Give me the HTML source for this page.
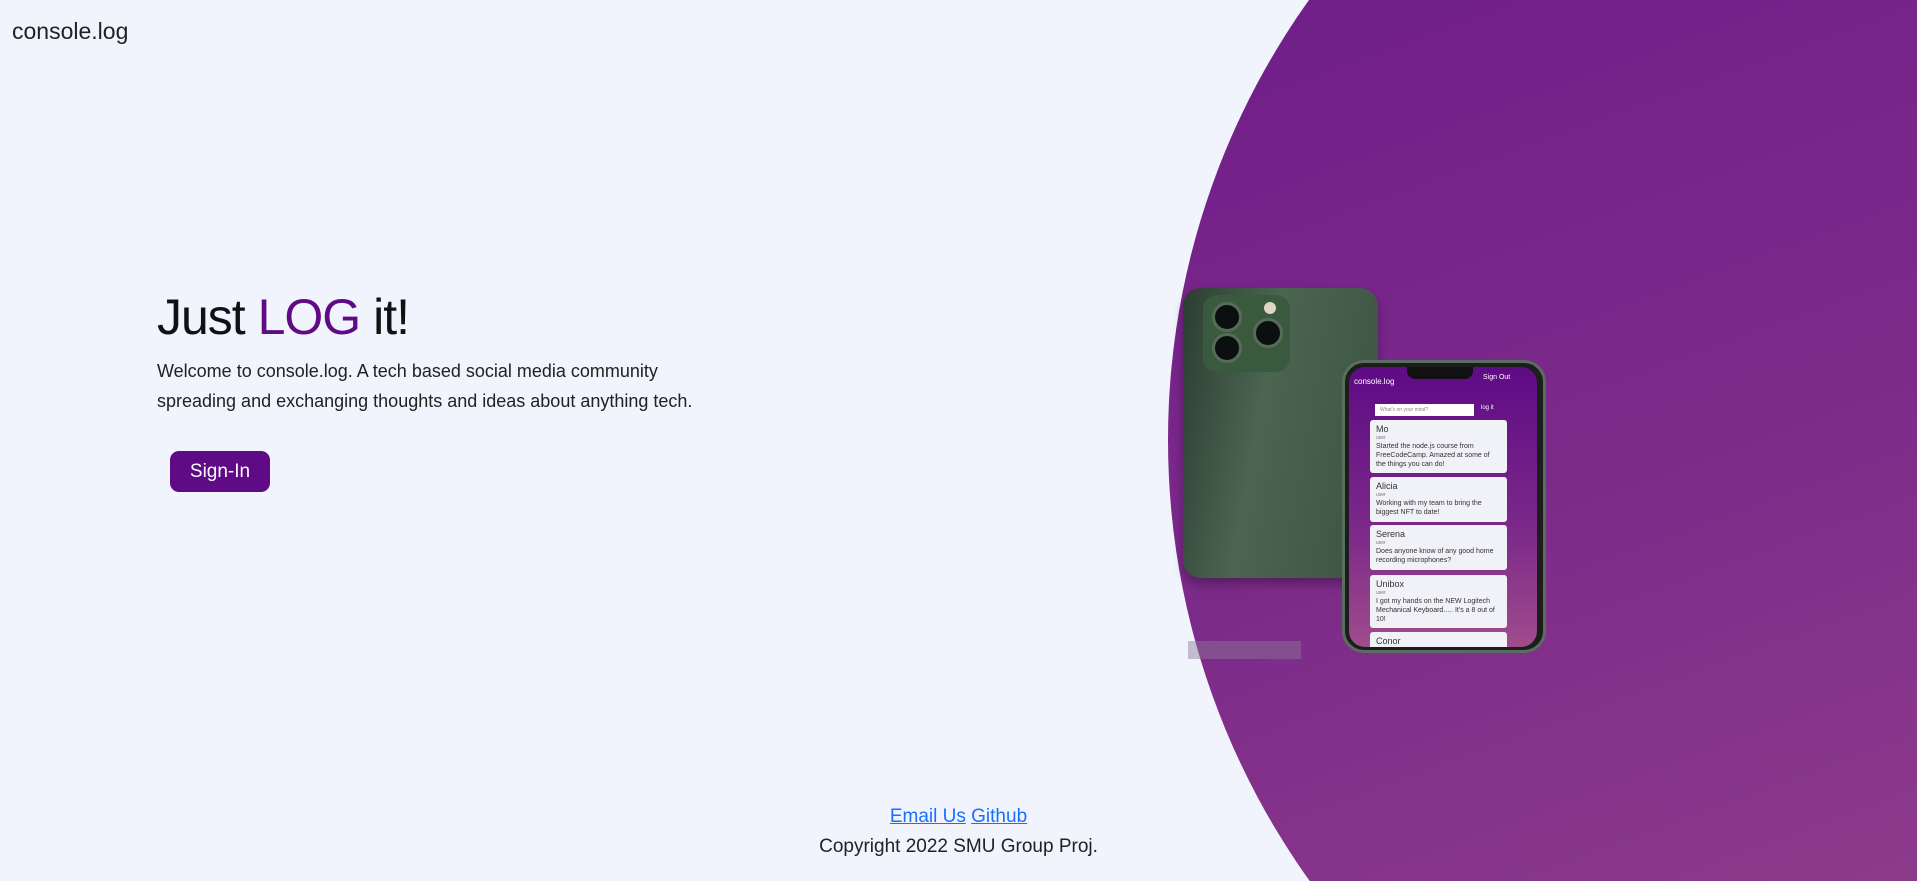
<!DOCTYPE html>
<html><head><meta charset="utf-8"><style>
*{margin:0;padding:0;box-sizing:border-box}
html,body{width:1917px;height:881px;overflow:hidden}
body{background:#f1f3fd;font-family:"Liberation Sans",sans-serif;color:#111}
#w{position:relative;width:1917px;height:881px;overflow:hidden}
.a{position:absolute}
.circ{left:1168px;top:-317px;width:1514px;height:1514px;border-radius:50%;background:linear-gradient(160deg,#6a1888 0%,#7c2a8a 45%,#a04c8c 100%)}
.logo{left:12px;top:18px;font-size:23px;font-weight:300;color:#222}
h1{position:absolute;left:157px;top:288px;font-size:50px;font-weight:400;letter-spacing:-1px}
h1 span{color:#5e0b85}
.p{left:157px;top:356px;font-size:18px;line-height:30px;color:#222;width:570px}
.btn{left:170px;top:451px;width:100px;height:41px;background:#5e0b85;border-radius:9px;color:#fff;font-size:19px;text-align:center;line-height:41px}
.foot{left:0;width:1917px;text-align:center;font-size:19px;color:#222}
.foot a{color:#1a6fff;text-decoration:underline}
.card{position:absolute;left:21px;width:137px;background:#f1f1f8;border-radius:3px;font-size:7px;padding:4px 6px;line-height:9px;color:#333}
.card b{font-weight:400;font-size:9px;display:block;line-height:11px}
.card i{font-style:normal;font-size:5px;display:block;color:#777;line-height:7px}
</style></head><body><div id="w">
<div class="a circ"></div>
<div class="a logo">console.log</div>
<h1>Just <span>LOG</span> it!</h1>
<div class="a p">Welcome to console.log. A tech based social media community spreading and exchanging thoughts and ideas about anything tech.</div>
<div class="a btn">Sign-In</div>
<div class="a foot" style="top:806px"><a>Email Us</a> <a>Github</a></div>
<div class="a foot" style="top:836px">Copyright 2022 SMU Group Proj.</div>

<div class="a" style="left:1183px;top:288px;width:195px;height:290px;border-radius:18px;background:linear-gradient(100deg,#2c3d31,#4b6551 40%,#3c5242);box-shadow:0 6px 10px rgba(0,0,0,.3)"></div>
<div class="a" style="left:1203px;top:295px;width:87px;height:77px;border-radius:14px;background:#3a5a40"></div>
<div class="a" style="left:1212px;top:302px;width:30px;height:30px;border-radius:50%;background:#0c0f10;border:3px solid #566b58"></div>
<div class="a" style="left:1212px;top:333px;width:30px;height:30px;border-radius:50%;background:#0c0f10;border:3px solid #566b58"></div>
<div class="a" style="left:1253px;top:318px;width:30px;height:30px;border-radius:50%;background:#0c0f10;border:3px solid #566b58"></div>
<div class="a" style="left:1264px;top:302px;width:12px;height:12px;border-radius:50%;background:#ddd6c0"></div>
<div class="a" style="left:1342px;top:360px;width:204px;height:293px;border-radius:22px;background:#1a1f1c;border:3px solid #5a6d5e"></div>
<div class="a" style="left:1349px;top:367px;width:188px;height:280px;border-radius:16px;background:linear-gradient(180deg,#5e0b85,#7d2a8a 60%,#a04c8c);overflow:hidden">
 <div class="a" style="left:58px;top:0;width:66px;height:12px;background:#111;border-radius:0 0 8px 8px"></div>
 <div class="a" style="left:5px;top:10px;color:#fff;font-size:8px">console.log</div>
 <div class="a" style="left:134px;top:7px;color:#fff;font-size:7px">Sign Out</div>
 <div class="a" style="left:26px;top:37px;width:99px;height:12px;background:#fff;font-size:5px;color:#888;padding:3px 5px">What's on your mind?</div>
 <div class="a" style="left:132px;top:38px;color:#fff;font-size:6px">log it</div>
 <div class="card" style="top:53px;height:53px"><b>Mo</b><i>user</i>Started the node.js course from FreeCodeCamp. Amazed at some of the things you can do!</div>
 <div class="card" style="top:110px;height:45px"><b>Alicia</b><i>user</i>Working with my team to bring the biggest NFT to date!</div>
 <div class="card" style="top:158px;height:45px"><b>Serena</b><i>user</i>Does anyone know of any good home recording microphones?</div>
 <div class="card" style="top:208px;height:53px"><b>Unibox</b><i>user</i>I got my hands on the NEW Logitech Mechanical Keyboard..... It's a 8 out of 10!</div>
 <div class="card" style="top:265px;height:30px"><b>Conor</b></div>
</div>
<div class="a" style="left:1188px;top:641px;width:113px;height:18px;background:rgba(140,120,150,.45)"></div>
</div></body></html>
